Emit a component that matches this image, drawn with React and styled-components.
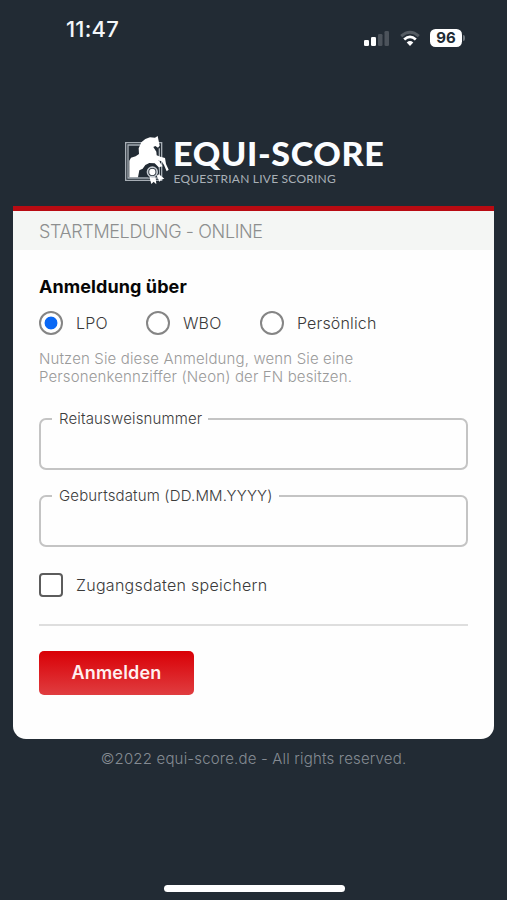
import React, { useState } from "react";
import styled, { createGlobalStyle } from "styled-components";

const GlobalStyle = createGlobalStyle`
  * { box-sizing: border-box; }
  body { margin: 0; background: #222b34; font-family: Inter, "Liberation Sans", sans-serif; }
`;

const Screen = styled.div`
  width: 507px;
  height: 900px;
  display: flex;
  flex-direction: column;
  background: #222b34;
  overflow: hidden;
`;

const StatusBar = styled.header`
  height: 134px;
  flex: none;
  display: flex;
  justify-content: space-between;
  align-items: flex-start;
  padding: 16px 42px 0 66px;
`;

const Clock = styled.time`
  color: #f3f6f9;
  font-size: 22px;
  line-height: 26px;
  font-weight: 550;
  letter-spacing: 0.2px;
`;

const StatusIcons = styled.div`
  display: flex;
  align-items: center;
  margin-top: 12px;
  height: 20px;
`;

const Signal = styled.svg`
  margin-right: 10px;
`;

const Battery = styled.div`
  width: 32px;
  height: 18px;
  margin-left: 10px;
  border-radius: 5.5px;
  background: #fff;
  color: #222b34;
  font-size: 15px;
  line-height: 18px;
  font-weight: 700;
  text-align: center;
`;

const BatteryTip = styled.span`
  width: 2px;
  height: 6px;
  margin-left: 1px;
  border-radius: 0 2px 2px 0;
  background: #6f767d;
`;

const Brand = styled.div`
  height: 72px;
  flex: none;
  display: flex;
  padding-left: 124px;
`;

const BrandText = styled.div`
  padding: 3px 0 0 2px;
  white-space: nowrap;
`;

const BrandName = styled.h1`
  margin: 0;
  font-family: Lato, Inter, sans-serif;
  font-size: 31.5px;
  line-height: 35px;
  font-weight: 900;
  letter-spacing: 0.6px;
  color: #fbfdff;
  transform: scaleX(1.08);
  transform-origin: 0 50%;
`;

const BrandLine = styled.p`
  margin: 0;
  padding-left: 0.5px;
  font-family: Lato, Inter, sans-serif;
  font-size: 12px;
  line-height: 13px;
  letter-spacing: 0.22px;
  color: #a9b0b7;
`;

const Card = styled.main`
  width: 481px;
  height: 533px;
  flex: none;
  margin-left: 13px;
  border-top: 5px solid #b90b12;
  border-radius: 0 0 13px 13px;
  background: #fefefe;
  overflow: hidden;
`;

const CardTitle = styled.h2`
  height: 39px;
  margin: 0;
  padding: 1px 26px 0;
  background: #f4f6f4;
  color: #8d8f8f;
  font-size: 18px;
  line-height: 39px;
  font-weight: 300;
  letter-spacing: -0.37px;
`;

const Form = styled.form`
  padding: 25px 26px 0;
`;

const GroupLabel = styled.h3`
  margin: 0;
  color: #060606;
  font-size: 18px;
  line-height: 24px;
  font-weight: 650;
  letter-spacing: 0.08px;
`;

const RadioRow = styled.div`
  display: flex;
  margin-top: 11px;
`;

const Choice = styled.label`
  display: flex;
  align-items: center;
  gap: 13px;
  height: 25px;
  width: ${(p) => p.$width || "auto"};
  color: #3a3a3a;
  font-size: 16px;
  letter-spacing: ${(p) => p.$tracking || "0.15px"};
  font-weight: 330;
  white-space: nowrap;
`;

const Radio = styled.input.attrs({ type: "radio" })`
  appearance: none;
  flex: none;
  width: 24px;
  height: 24px;
  margin: 0;
  border: 2px solid #858585;
  border-radius: 50%;
  background: #fff;
  &:checked {
    background: radial-gradient(circle, #0a68f5 0 6px, #fff 6.8px);
  }
`;

const Checkbox = styled.input.attrs({ type: "checkbox" })`
  appearance: none;
  flex: none;
  width: 24px;
  height: 24px;
  margin: 0;
  border: 2px solid #5c5c5c;
  border-radius: 4px;
  background: #fff;
`;

const Hint = styled.p`
  margin: 15px 0 0;
  color: #9a9a9a;
  font-size: 15px;
  line-height: 18px;
  font-weight: 330;
  letter-spacing: 0.14px;
  white-space: nowrap;
`;

const Field = styled.fieldset`
  height: 61px;
  margin: ${(p) => p.$top} 0 0;
  padding: 0 12px;
  min-width: 0;
  border: 2px solid #c4c4c4;
  border-radius: 7px;
`;

const Legend = styled.legend`
  height: 20px;
  padding: 0 6px 0 7px;
  margin-left: -1px;
  color: #3c3c3c;
  font-size: 15px;
  line-height: 20px;
  font-weight: 330;
  letter-spacing: 0.16px;
`;

const TextInput = styled.input`
  width: 100%;
  height: 32px;
  padding: 0;
  border: 0;
  outline: 0;
  background: transparent;
  font: 300 16px Inter, sans-serif;
`;

const Remember = styled.div`
  margin-top: 25px;
`;

const Divider = styled.hr`
  height: 2px;
  margin: 27px 0 25px;
  border: 0;
  background: #dedede;
`;

const Submit = styled.button`
  display: block;
  width: 155px;
  height: 44px;
  padding: 0;
  border: 0;
  border-radius: 5px;
  background: linear-gradient(#d90006, #e03d40);
  color: #fff0f0;
  font: 600 18px/44px Inter, sans-serif;
  letter-spacing: 0.2px;
`;

const Footer = styled.footer`
  margin-top: 10px;
  color: #858b93;
  font-size: 15px;
  line-height: 20px;
  font-weight: 330;
  letter-spacing: 0.18px;
  text-align: center;
`;

const HomeIndicator = styled.div`
  width: 181px;
  height: 7px;
  margin: auto auto 8px 164px;
  border-radius: 4px;
  background: #fff;
`;

function HorseEmblem() {
  return (
    <svg width="47" height="52" viewBox="42 27 141 156" aria-hidden="true">
      <g fill="none" stroke="#a7aeb5" strokeWidth="4">
        <path d="M100 53H47V166H155V53H145" />
        <path d="M92 60H54V159H148V70" />
      </g>
      <path
        fill="#fff"
        d="M143 33L145 43L149 62L144 68L136 63L130 66L139 80L140 91L151 95L165 99L168 117L176 134L170 139L162 120L155 109L145 106L158 124L146 127L134 115L118 114L106 120L98 131L88 136L84 157H58V107L63 98L77 94L87 87L86 70L94 52L106 42L120 37L135 38Z"
      />
      <circle cx="127" cy="141" r="20" fill="#222b34" />
      <path d="M118 155L124 177L131 170L139 178L137 157ZM140 152L149 171L152 164L163 161L147 148Z" fill="#fff" />
      <circle cx="127" cy="141" r="14.5" fill="none" stroke="#c4cad0" strokeWidth="5" />
      <circle cx="127" cy="141" r="9.5" fill="#fff" />
    </svg>
  );
}

function SignalIcon() {
  return (
    <Signal width="26" height="17" viewBox="0 0 26 17" aria-hidden="true">
      <rect x="0" y="10" width="5" height="6" rx="1.3" fill="#fff" />
      <rect x="7" y="7" width="5" height="9" rx="1.3" fill="#fff" />
      <rect x="14" y="4" width="4.5" height="12" rx="1.3" fill="#4c535b" />
      <rect x="20.5" y="1" width="4.5" height="15" rx="1.3" fill="#4c535b" />
    </Signal>
  );
}

function WifiIcon() {
  return (
    <svg width="20" height="17" viewBox="0 0 20 17" fill="none" aria-hidden="true">
      <path d="M1.2 6.2Q10-1.6 18.8 6.2" stroke="#555c63" strokeWidth="3" />
      <path d="M4.2 9.5Q10 4.2 15.8 9.5" stroke="#fff" strokeWidth="2.8" />
      <path d="M6.7 12.5Q10 9.6 13.3 12.5L10 16Z" fill="#fff" />
    </svg>
  );
}

const OPTIONS = [
  { name: "LPO", width: "107px" },
  { name: "WBO", width: "114px" },
  { name: "Persönlich" },
];

export default function App() {
  const [mode, setMode] = useState("LPO");
  return (
    <Screen>
      <GlobalStyle />
      <StatusBar>
        <Clock>11:47</Clock>
        <StatusIcons>
          <SignalIcon />
          <WifiIcon />
          <Battery>96</Battery>
          <BatteryTip />
        </StatusIcons>
      </StatusBar>
      <Brand>
        <HorseEmblem />
        <BrandText>
          <BrandName>EQUI-SCORE</BrandName>
          <BrandLine>EQUESTRIAN LIVE SCORING</BrandLine>
        </BrandText>
      </Brand>
      <Card>
        <CardTitle>STARTMELDUNG - ONLINE</CardTitle>
        <Form onSubmit={(e) => e.preventDefault()}>
          <GroupLabel>Anmeldung über</GroupLabel>
          <RadioRow>
            {OPTIONS.map((o) => (
              <Choice key={o.name} $width={o.width}>
                <Radio name="mode" checked={mode === o.name} onChange={() => setMode(o.name)} />
                {o.name}
              </Choice>
            ))}
          </RadioRow>
          <Hint>
            Nutzen Sie diese Anmeldung, wenn Sie eine
            <br />
            Personenkennziffer (Neon) der FN besitzen.
          </Hint>
          <Field $top="23px">
            <Legend>Reitausweisnummer</Legend>
            <TextInput aria-label="Reitausweisnummer" />
          </Field>
          <Field $top="16px">
            <Legend>Geburtsdatum (DD.MM.YYYY)</Legend>
            <TextInput aria-label="Geburtsdatum" />
          </Field>
          <Remember>
            <Choice $tracking="0.28px">
              <Checkbox />
              Zugangsdaten speichern
            </Choice>
          </Remember>
          <Divider />
          <Submit>Anmelden</Submit>
        </Form>
      </Card>
      <Footer>©2022 equi-score.de - All rights reserved.</Footer>
      <HomeIndicator />
    </Screen>
  );
}
